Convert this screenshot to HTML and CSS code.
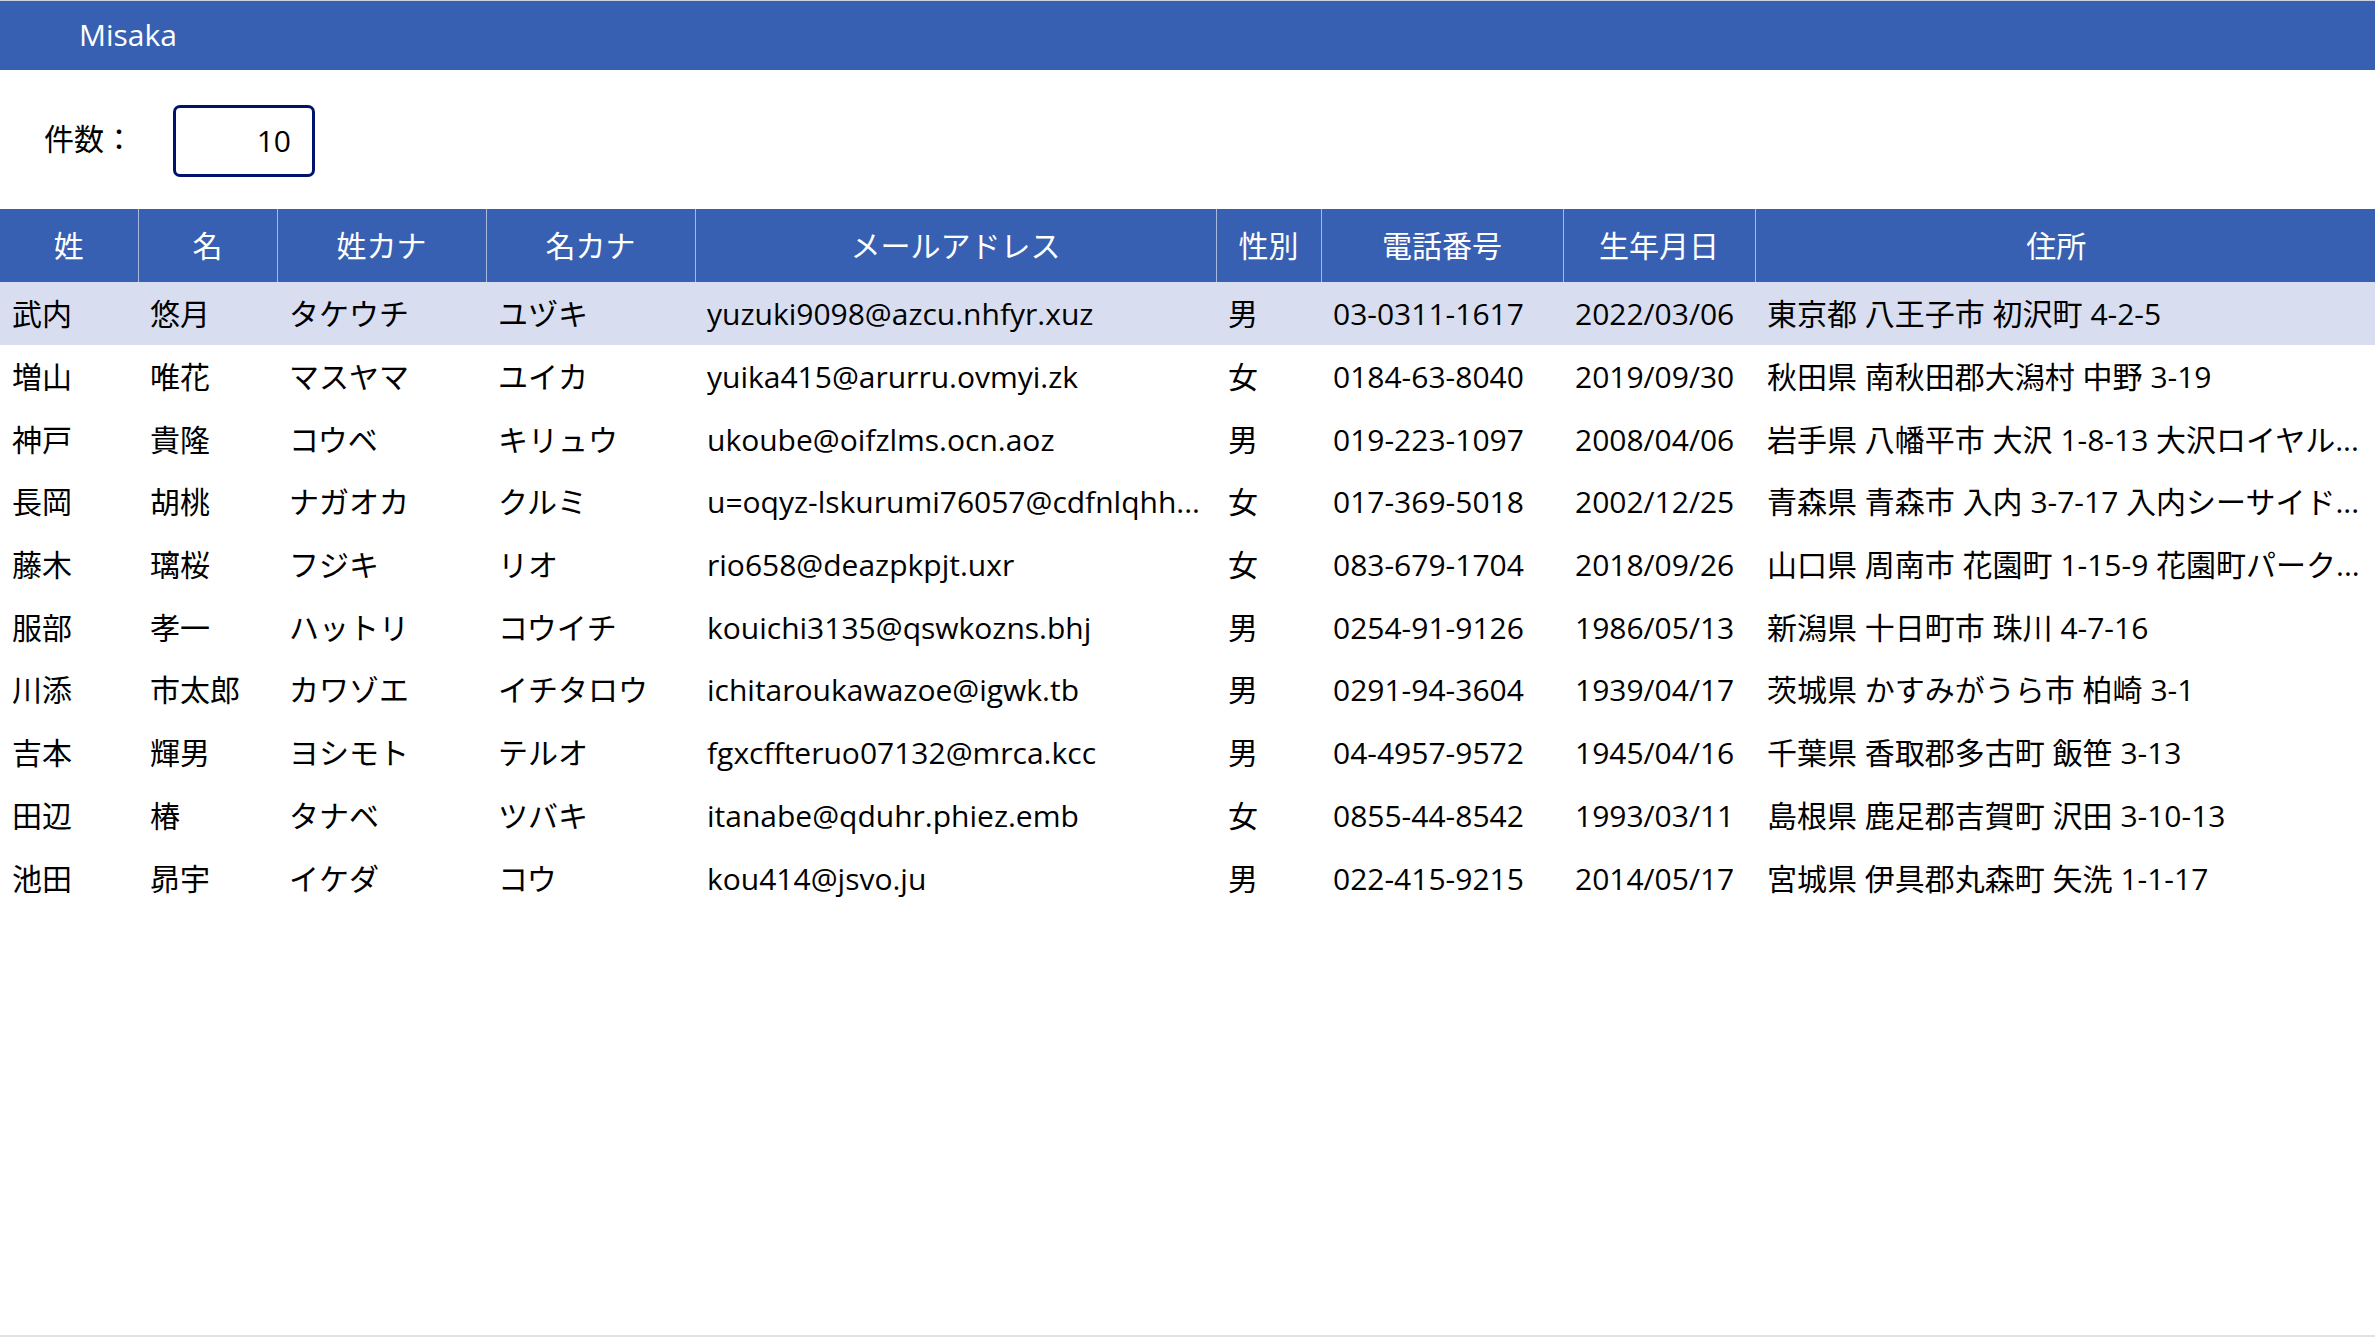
FILE: index.html
```html
<!DOCTYPE html>
<html lang="ja">
<head>
<meta charset="utf-8">
<title>Misaka</title>
<link rel="stylesheet" href="styles.css">
</head>
<body>
<div class="app">
  <header class="titlebar">
    <span class="title">Misaka</span>
  </header>
  <div class="toolbar">
    <label class="count-label" for="count">件数：</label>
    <div class="count-input" id="count">10</div>
  </div>
  <table class="grid">
    <colgroup>
      <col class="c-sei"><col class="c-mei"><col class="c-seikana"><col class="c-meikana">
      <col class="c-mail"><col class="c-sex"><col class="c-tel"><col class="c-birth"><col class="c-addr">
    </colgroup>
    <thead>
      <tr>
        <th>姓</th><th>名</th><th>姓カナ</th><th>名カナ</th><th>メールアドレス</th><th>性別</th><th>電話番号</th><th>生年月日</th><th class="th-addr">住所</th>
      </tr>
    </thead>
    <tbody>
      <tr class="selected"><td>武内</td><td>悠月</td><td>タケウチ</td><td>ユヅキ</td><td>yuzuki9098@azcu.nhfyr.xuz</td><td>男</td><td>03-0311-1617</td><td>2022/03/06</td><td>東京都 八王子市 初沢町 4-2-5</td></tr>
      <tr><td>増山</td><td>唯花</td><td>マスヤマ</td><td>ユイカ</td><td>yuika415@arurru.ovmyi.zk</td><td>女</td><td>0184-63-8040</td><td>2019/09/30</td><td>秋田県 南秋田郡大潟村 中野 3-19</td></tr>
      <tr><td>神戸</td><td>貴隆</td><td>コウベ</td><td>キリュウ</td><td>ukoube@oifzlms.ocn.aoz</td><td>男</td><td>019-223-1097</td><td>2008/04/06</td><td>岩手県 八幡平市 大沢 1-8-13 大沢ロイヤル...</td></tr>
      <tr><td>長岡</td><td>胡桃</td><td>ナガオカ</td><td>クルミ</td><td>u=oqyz-lskurumi76057@cdfnlqhh...</td><td>女</td><td>017-369-5018</td><td>2002/12/25</td><td>青森県 青森市 入内 3-7-17 入内シーサイド...</td></tr>
      <tr><td>藤木</td><td>璃桜</td><td>フジキ</td><td>リオ</td><td>rio658@deazpkpjt.uxr</td><td>女</td><td>083-679-1704</td><td>2018/09/26</td><td>山口県 周南市 花園町 1-15-9 花園町パーク...</td></tr>
      <tr><td>服部</td><td>孝一</td><td>ハットリ</td><td>コウイチ</td><td>kouichi3135@qswkozns.bhj</td><td>男</td><td>0254-91-9126</td><td>1986/05/13</td><td>新潟県 十日町市 珠川 4-7-16</td></tr>
      <tr><td>川添</td><td>市太郎</td><td>カワゾエ</td><td>イチタロウ</td><td>ichitaroukawazoe@igwk.tb</td><td>男</td><td>0291-94-3604</td><td>1939/04/17</td><td>茨城県 かすみがうら市 柏崎 3-1</td></tr>
      <tr><td>吉本</td><td>輝男</td><td>ヨシモト</td><td>テルオ</td><td>fgxcffteruo07132@mrca.kcc</td><td>男</td><td>04-4957-9572</td><td>1945/04/16</td><td>千葉県 香取郡多古町 飯笹 3-13</td></tr>
      <tr><td>田辺</td><td>椿</td><td>タナベ</td><td>ツバキ</td><td>itanabe@qduhr.phiez.emb</td><td>女</td><td>0855-44-8542</td><td>1993/03/11</td><td>島根県 鹿足郡吉賀町 沢田 3-10-13</td></tr>
      <tr><td>池田</td><td>昴宇</td><td>イケダ</td><td>コウ</td><td>kou414@jsvo.ju</td><td>男</td><td>022-415-9215</td><td>2014/05/17</td><td>宮城県 伊具郡丸森町 矢洗 1-1-17</td></tr>
    </tbody>
  </table>
</div>
</body>
</html>
```
FILE: styles.css
```css
html, body {
  margin: 0;
  padding: 0;
  background: #ffffff;
}

body {
  font-family: "Open Sans", "Noto Sans CJK JP", sans-serif;
  color: #000000;
}

.app {
  box-sizing: border-box;
  width: 2375px;
  height: 1337px;
  border-bottom: 2px solid #e2e2e2;
  border-top: 1px solid #c9d1e3;
  overflow: hidden;
  display: flex;
  flex-direction: column;
}

.titlebar {
  box-sizing: border-box;
  height: 69px;
  background: #3860b2;
  display: flex;
  align-items: center;
  padding-left: 79px;
  flex: none;
}

.title {
  color: #ffffff;
  font-size: 30px;
  line-height: 1;
  padding-bottom: 2px;
}

.toolbar {
  flex: none;
  display: flex;
  align-items: center;
  height: 139px;
  padding-left: 44px;
  box-sizing: border-box;
}

.count-label {
  font-size: 30px;
  width: 129px;
  line-height: 1;
  padding-bottom: 1px;
}

.count-input {
  box-sizing: border-box;
  width: 142px;
  height: 72px;
  margin-top: 2px;
  border: 3px solid #00126b;
  border-radius: 7px;
  font-size: 30px;
  text-align: right;
  padding-right: 21px;
  line-height: 66px;
}

.grid {
  width: 2375px;
  border-collapse: collapse;
  table-layout: fixed;
  flex: none;
}

.c-sei { width: 138px; }
.c-mei { width: 139px; }
.c-seikana { width: 209px; }
.c-meikana { width: 209px; }
.c-mail { width: 521px; }
.c-sex { width: 105px; }
.c-tel { width: 242px; }
.c-birth { width: 192px; }
.c-addr { width: 620px; }

.grid th {
  height: 73px;
  padding: 0;
  background: #3860b2;
  color: #ffffff;
  font-weight: normal;
  font-size: 30px;
  line-height: 40px;
  text-align: center;
  border-left: 1px solid #a9b8de;
}

.grid th:first-child {
  border-left: none;
}

.grid th.th-addr {
  padding-right: 18px;
}

.grid td {
  box-sizing: border-box;
  height: 62.7px;
  padding: 2px 12px 0 12px;
  font-size: 30px;
  line-height: 40px;
  white-space: nowrap;
  overflow: hidden;
  text-overflow: ellipsis;
  vertical-align: middle;
}

.grid tr.selected td {
  background: #d8def0;
}
```
